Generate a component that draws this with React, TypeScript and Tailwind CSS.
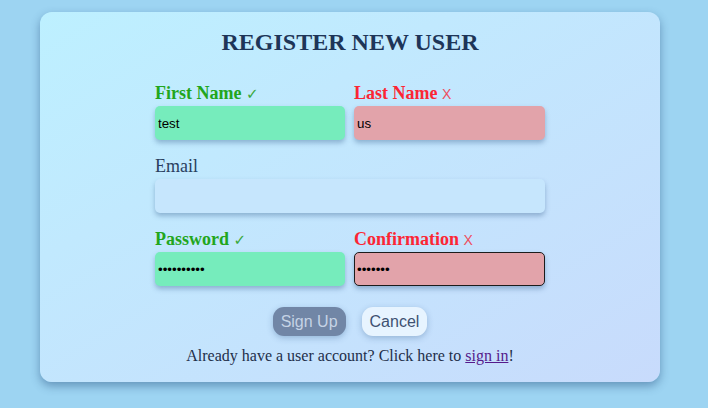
import React from "react";

const serif = { fontFamily: '"Liberation Serif", "Times New Roman", serif' };

function Label({ text, state }: { text: string; state?: "ok" | "bad" }) {
  if (state === "ok") {
    return (
      <div className="h-[21px] mb-[2px] text-[18px] leading-[21px] font-bold text-[#22a61c] whitespace-nowrap" style={serif}>
        {text}{" "}
        <span className="font-normal text-[15px] text-[#3aa83a] [font-family:'DejaVu_Sans',sans-serif]">✓</span>
      </div>
    );
  }
  if (state === "bad") {
    return (
      <div className="h-[21px] mb-[2px] text-[18px] leading-[21px] font-bold text-[#fc2634] whitespace-nowrap" style={serif}>
        {text}{" "}
        <span className="font-normal text-[14px] text-[#ee4e5e] [font-family:'Liberation_Sans',Arial,sans-serif]">X</span>
      </div>
    );
  }
  return (
    <div className="h-[21px] mb-[2px] text-[18px] leading-[21px] text-[#2a3f5f] whitespace-nowrap" style={serif}>
      {text}
    </div>
  );
}

function Field({
  value,
  type = "text",
  tone,
  focused,
}: {
  value: string;
  type?: string;
  tone: "ok" | "bad" | "neutral";
  focused?: boolean;
}) {
  const bg =
    tone === "ok" ? "bg-[#76ecbc]" : tone === "bad" ? "bg-[#e2a3aa]" : "bg-[#c6e6fd]";
  return (
    <input
      readOnly
      type={type}
      value={value}
      className={`${bg} block w-full h-[34px] rounded-[5px] px-[2px] text-[13.33px] text-black outline-none shadow-[0_3px_5px_rgba(40,80,130,0.35)] ${
        focused ? "border border-[#1c1c1c]" : "border border-transparent"
      }`}
      style={{ fontFamily: '"Liberation Sans", Arial, sans-serif' }}
    />
  );
}

export default function App() {
  return (
    <div className="w-[708px] h-[408px] bg-[#9dd4f2] overflow-hidden pt-[12px]">
      <div className="ml-[40px] w-[620px] h-[370px] rounded-[12px] bg-gradient-to-br from-[#bdf0ff] to-[#c8dbfc] shadow-[0_4px_10px_rgba(30,70,120,0.45)] pt-[16px] flex flex-col items-center">
        <h1 className="h-[28px] text-[24px] leading-[28px] font-bold text-[#1e3558] tracking-normal" style={serif}>
          REGISTER NEW USER
        </h1>
        <div className="w-[390px] mt-[27px] flex flex-col gap-[16px]">
          <div className="grid grid-cols-[190px_191px] gap-x-[9px]">
            <div>
              <Label text="First Name" state="ok" />
              <Field value="test" tone="ok" />
            </div>
            <div>
              <Label text="Last Name" state="bad" />
              <Field value="us" tone="bad" />
            </div>
          </div>
          <div>
            <Label text="Email" />
            <Field value="" tone="neutral" />
          </div>
          <div className="grid grid-cols-[190px_191px] gap-x-[9px]">
            <div>
              <Label text="Password" state="ok" />
              <Field value="1234567890" type="password" tone="ok" />
            </div>
            <div>
              <Label text="Confirmation" state="bad" />
              <Field value="1234567" type="password" tone="bad" focused />
            </div>
          </div>
        </div>
        <div className="mt-[21px] flex gap-[16px] h-[29px]" style={{ fontFamily: '"Liberation Sans", Arial, sans-serif' }}>
          <button className="h-[29px] px-[8px] rounded-[11px] bg-[#7186a6] text-[#c5d3e5] text-[16px] leading-[18px] shadow-[0_2px_6px_rgba(40,80,130,0.3)]">
            Sign Up
          </button>
          <button className="h-[29px] px-[8px] rounded-[11px] bg-[#e7f4ff] text-[#3e5172] text-[16px] leading-[18px] shadow-[0_2px_6px_rgba(40,80,130,0.3)]">
            Cancel
          </button>
        </div>
        <p className="mt-[11px] text-[16px] leading-[18px] text-[#1f2f4a]" style={serif}>
          Already have a user account? Click here to{" "}
          <a href="#" className="underline text-[#551a8b]">sign in</a>!
        </p>
      </div>
    </div>
  );
}
